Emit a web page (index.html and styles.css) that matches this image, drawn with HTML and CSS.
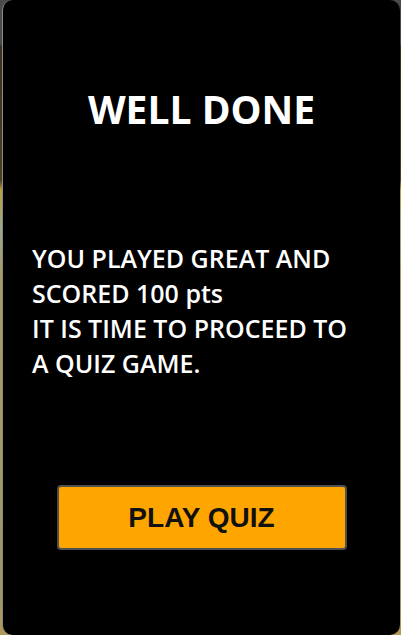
FILE: index.html
```html
<!DOCTYPE html>
<html lang="en">
<head>
<meta charset="utf-8">
<title>Well done</title>
<link rel="stylesheet" href="styles.css">
</head>
<body>
<main class="card">
  <h1 class="title">WELL DONE</h1>
  <p class="message">YOU PLAYED GREAT AND<br>SCORED 100 pts<br>IT IS TIME TO PROCEED TO<br>A QUIZ GAME.</p>
  <button class="play" type="button">PLAY QUIZ</button>
</main>
</body>
</html>
```

FILE: styles.css
```css
html, body {
  margin: 0;
  padding: 0;
  height: 100%;
}

body {
  background: linear-gradient(to bottom,
    #4b4b4b 0px, #4b4b4b 44px,
    #3a3220 46px, #4a3f22 180px,
    #b8a040 190px, #9aa890 230px,
    #a89a66 270px, #a29566 600px, #b09a58 635px);
  overflow: hidden;
}

.card {
  box-sizing: border-box;
  margin-left: 2px;
  width: 398px;
  height: 635px;
  background: #000;
  border-left: 1px solid #8a8a8a;
  border-radius: 10px;
  display: flex;
  flex-direction: column;
  align-items: center;
  padding: 85px 0 0;
}

.title {
  margin: 0;
  font-family: "Open Sans", "Noto Sans", sans-serif;
  font-weight: 700;
  font-size: 39px;
  line-height: 48px;
  color: #fff;
  letter-spacing: 0;
}

.message {
  align-self: stretch;
  margin: 108px 0 0;
  padding-left: 29px;
  font-family: "Open Sans", "Noto Sans", sans-serif;
  font-weight: 600;
  font-size: 25px;
  line-height: 35px;
  color: #fff;
}

.play {
  margin-top: 104px;
  box-sizing: border-box;
  width: 290px;
  height: 65px;
  background: #ffa500;
  border: 2px solid #505050;
  border-radius: 4px;
  font-family: "Liberation Sans", Arial, sans-serif;
  font-weight: 700;
  font-size: 28px;
  color: #111;
  padding: 0;
}
```
